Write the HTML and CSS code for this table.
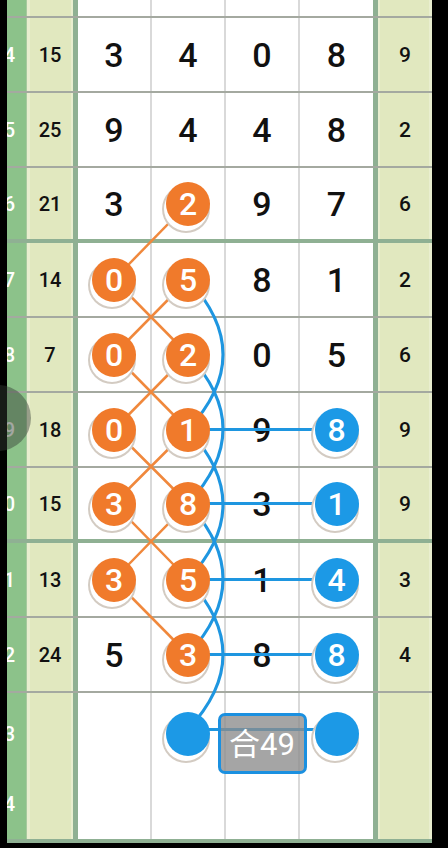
FILE: index.html
```html
<!DOCTYPE html>
<html lang="zh-CN">
<head>
  <meta charset="UTF-8">
  <meta name="viewport" content="width=device-width, initial-scale=1.0">
  <title>走势图</title>
  <link rel="stylesheet" href="styles.css">
</head>
<body>
  <div class="screen">
    <div class="board">
      <div class="row">
        <div class="idx">33</div><div class="sum"></div>
        <div class="cell"></div><div class="cell"></div><div class="cell"></div><div class="cell"></div>
        <div class="tail"></div>
      </div>
      <div class="row">
        <div class="idx">34</div><div class="sum">15</div>
        <div class="cell">3</div><div class="cell">4</div><div class="cell">0</div><div class="cell">8</div>
        <div class="tail">9</div>
      </div>
      <div class="row">
        <div class="idx">35</div><div class="sum">25</div>
        <div class="cell">9</div><div class="cell">4</div><div class="cell">4</div><div class="cell">8</div>
        <div class="tail">2</div>
      </div>
      <div class="row end">
        <div class="idx">36</div><div class="sum">21</div>
        <div class="cell">3</div><div class="cell"><span class="ball orange">2</span></div><div class="cell">9</div><div class="cell">7</div>
        <div class="tail">6</div>
      </div>
      <div class="row">
        <div class="idx">37</div><div class="sum">14</div>
        <div class="cell"><span class="ball orange">0</span></div><div class="cell"><span class="ball orange">5</span></div><div class="cell">8</div><div class="cell">1</div>
        <div class="tail">2</div>
      </div>
      <div class="row">
        <div class="idx">38</div><div class="sum">7</div>
        <div class="cell"><span class="ball orange">0</span></div><div class="cell"><span class="ball orange">2</span></div><div class="cell">0</div><div class="cell">5</div>
        <div class="tail">6</div>
      </div>
      <div class="row">
        <div class="idx">39</div><div class="sum">18</div>
        <div class="cell"><span class="ball orange">0</span></div><div class="cell"><span class="ball orange">1</span></div><div class="cell">9</div><div class="cell"><span class="ball blue">8</span></div>
        <div class="tail">9</div>
      </div>
      <div class="row end">
        <div class="idx">40</div><div class="sum">15</div>
        <div class="cell"><span class="ball orange">3</span></div><div class="cell"><span class="ball orange">8</span></div><div class="cell">3</div><div class="cell"><span class="ball blue">1</span></div>
        <div class="tail">9</div>
      </div>
      <div class="row">
        <div class="idx">41</div><div class="sum">13</div>
        <div class="cell"><span class="ball orange">3</span></div><div class="cell"><span class="ball orange">5</span></div><div class="cell">1</div><div class="cell"><span class="ball blue">4</span></div>
        <div class="tail">3</div>
      </div>
      <div class="row">
        <div class="idx">42</div><div class="sum">24</div>
        <div class="cell">5</div><div class="cell"><span class="ball orange">3</span></div><div class="cell">8</div><div class="cell"><span class="ball blue">8</span></div>
        <div class="tail">4</div>
      </div>
      <div class="row">
        <div class="idx">43</div><div class="sum"></div>
        <div class="cell"></div><div class="cell"><span class="ball blue"></span></div><div class="cell"><span class="total">合49</span></div><div class="cell"><span class="ball blue"></span></div>
        <div class="tail"></div>
      </div>
      <div class="row end">
        <div class="idx">44</div><div class="sum"></div>
        <div class="cell"></div><div class="cell"></div><div class="cell"></div><div class="cell"></div>
        <div class="tail"></div>
      </div>
    </div>

    <!-- connecting lines, drawn under the balls -->
    <svg class="links" width="448" height="848" viewBox="0 0 448 848">
      <g class="orange-lines">
        <path d="M188 203.5 L114 279.5"/>
        <path d="M114 279.5 L188 354.5 M188 279.5 L114 354.5"/>
        <path d="M114 354.5 L188 429.5 M188 354.5 L114 429.5"/>
        <path d="M114 429.5 L188 503.5 M188 429.5 L114 503.5"/>
        <path d="M114 503.5 L188 579.5 M188 503.5 L114 579.5"/>
        <path d="M114 579.5 L188 654.5"/>
      </g>
      <g class="blue-lines">
        <path d="M188 429.5 H336 M188 503.5 H336 M188 579.5 H336 M188 654.5 H336 M188 729.5 H336"/>
        <path d="M188 279.5 Q258 354.5 188 429.5"/>
        <path d="M188 354.5 Q258 429 188 503.5"/>
        <path d="M188 429.5 Q258 504.5 188 579.5"/>
        <path d="M188 503.5 Q258 579 188 654.5"/>
        <path d="M188 579.5 Q258 654.5 188 729.5"/>
      </g>
    </svg>

    <div class="handle"></div>
  </div>
</body>
</html>
```

FILE: styles.css
```css
:root {
  --green: #8cc28a;
  --yellow: #e1e8bf;
  --rule: #8fb093;
  --line: #a4a9a0;
  --grid: #d9d9d9;
  --orange: #f07a2b;
  --blue: #1c99e6;
}

* {
  box-sizing: border-box;
}

body {
  margin: 0;
  background: #000;
  font-family: Roboto, "Noto Sans", sans-serif;
  overflow: hidden;
}

.screen {
  position: relative;
  width: 448px;
  height: 848px;
  overflow: hidden;
}

.board {
  width: 425px;
  margin-left: 7px;
  margin-top: -57px;
}

.row {
  display: grid;
  grid-template-columns: 20px 51px 74px 74px 74px 73px 59px;
  height: 75px;
  border-bottom: 2px solid var(--line);
}

.row.end {
  border-bottom: 4px solid var(--rule);
}

.idx {
  background: var(--green);
  color: #fff;
  font-size: 20px;
  font-weight: 500;
  display: flex;
  align-items: center;
  justify-content: flex-end;
  padding-right: 11px;
  overflow: hidden;
  border-right: 1px solid #a7c99f;
}

.sum, .tail {
  background: var(--yellow);
  color: #111;
  font-size: 20px;
  font-weight: 500;
  display: flex;
  align-items: center;
  justify-content: center;
}

.sum {
  border-right: 5px solid var(--rule);
  box-shadow: inset 3px 0 #e9eecf, inset -2px 0 #e9eecf;
}

.tail {
  border-left: 5px solid var(--rule);
  font-size: 21px;
  box-shadow: inset 2px 0 #e9eecf, inset -3px 0 #e9eecf;
}

.cell {
  background: #fff;
  color: #111;
  font-size: 34px;
  font-weight: 500;
  display: flex;
  align-items: center;
  justify-content: center;
  border-right: 2px solid var(--grid);
}

.cell:nth-child(6) {
  border-right: none;
}

.ball {
  position: relative;
  z-index: 2;
  width: 44px;
  height: 44px;
  border-radius: 50%;
  color: #fff;
  font-size: 32px;
  font-weight: 500;
  line-height: 44px;
  text-align: center;
  box-shadow: -2px 5px 0 0 #fff, -2px 5px 0 2px #d3cbc2;
}

.ball.orange {
  background: var(--orange);
}

.ball.blue {
  background: var(--blue);
}

.total {
  position: relative;
  z-index: 2;
  flex: none;
  width: 89px;
  height: 61px;
  margin-top: 20px;
  border: 3px solid #1b90e0;
  border-radius: 7px;
  background: rgba(140, 140, 140, 0.78);
  color: #fff;
  font-family: Roboto, "Noto Sans CJK SC", sans-serif;
  font-size: 31px;
  font-weight: 400;
  display: flex;
  align-items: center;
  justify-content: center;
  padding-bottom: 4px;
}

.links {
  position: absolute;
  top: 0;
  left: 0;
  z-index: 1;
  pointer-events: none;
}

.orange-lines path {
  fill: none;
  stroke: #f0883c;
  stroke-width: 2.5;
}

.blue-lines path {
  fill: none;
  stroke: #1e96e0;
  stroke-width: 3;
}

.handle {
  position: absolute;
  left: -35px;
  top: 385px;
  width: 66px;
  height: 66px;
  border-radius: 50%;
  background: rgba(50, 60, 50, 0.45);
  z-index: 3;
}
```
